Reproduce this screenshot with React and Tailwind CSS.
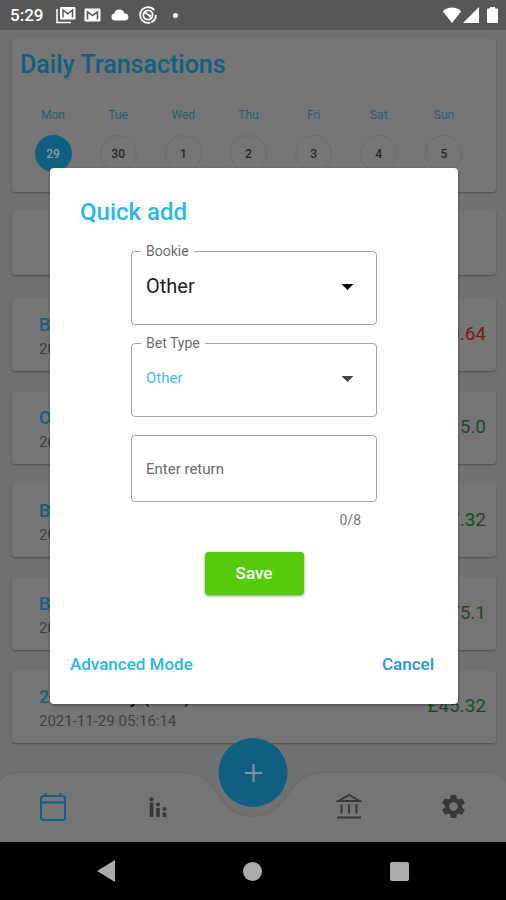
import { MdSettings } from "react-icons/md";

const days = [
  { name: "Mon", date: 29, selected: true },
  { name: "Tue", date: 30 },
  { name: "Wed", date: 1 },
  { name: "Thu", date: 2 },
  { name: "Fri", date: 3 },
  { name: "Sat", date: 4 },
  { name: "Sun", date: 5 },
];

const transactions = [
  { bookie: "B", detail: "", time: "2021", amount: "£0.64", loss: true },
  { bookie: "O", detail: "", time: "2021", amount: "5.0" },
  { bookie: "B", detail: "", time: "2021", amount: "£7.32" },
  { bookie: "B", detail: "", time: "2021", amount: "£75.1" },
  { bookie: "21bets", detail: "Daily (Free)", time: "2021-11-29 05:16:14", amount: "£45.32" },
];

const card = "rounded-[3px] bg-[#757575] shadow-[0_1px_2px_rgba(0,0,0,0.32)]";

function StatusBar() {
  return (
    <header className="flex h-[30px] shrink-0 items-center bg-[#575757] pr-2 pl-[10px] text-white">
      <time className="w-[46px] text-[17px] leading-5 font-medium">5:29</time>
      <div className="flex flex-1 items-center gap-2">
        <svg width="20" height="18" viewBox="0 0 20 18" aria-hidden="true">
          <path d="M1 3v13.5h14" fill="none" stroke="#fff" strokeWidth="1.5" />
          <rect x="4" y="1" width="15.5" height="12.5" rx="1" fill="#fff" />
          <path d="M7 11.5V4l4.8 3.8L16.5 4v7.5" fill="none" stroke="#575757" strokeWidth="1.5" />
        </svg>
        <svg width="17" height="14" viewBox="0 0 17 14" aria-hidden="true">
          <rect x="0.5" y="0.5" width="16" height="13" rx="1.2" fill="#fff" />
          <path d="M3.5 11.5V3.8l5 3.8 5-3.8v7.7" fill="none" stroke="#575757" strokeWidth="1.6" />
        </svg>
        <svg className="ml-[2px]" width="18" height="12" viewBox="0 0 18 12" aria-hidden="true">
          <path d="M4 11.500a3.600 3.600 0 0 1-.8-7.100A5.300 5.300 0 0 1 13.400 4.500 3.500 3.500 0 0 1 14.300 11.500Z" fill="#fff" />
        </svg>
        <svg className="ml-[2px]" width="18" height="18" viewBox="0 0 18 18" fill="none" stroke="#fff" aria-hidden="true">
          <circle cx="9" cy="9" r="7.9" strokeWidth="1.800" strokeDasharray="9 1 34 5.600" />
          <circle cx="9" cy="9" r="4.700" strokeWidth="1.700" />
          <path d="M5.500 8c2.500-2 4 2 7 1.500M6.500 6l5.500 6" strokeWidth="1.400" />
        </svg>
        <span className="ml-2 size-[5px] rounded-full bg-white" />
      </div>
      <svg width="56" height="18" viewBox="0 0 56 18" fill="#fff" aria-hidden="true">
        <path d="M10 17 .8 5.300C6 .3 14 .3 19.200 5.300Z" />
        <path d="M37 17V1L21 17Z" />
        <path d="M46 2.500h2V1h5v1.500h2a1 1 0 0 1 1 1v12.500a1 1 0 0 1-1 1h-9a1 1 0 0 1-1-1V3.500a1 1 0 0 1 1-1Z" />
      </svg>
    </header>
  );
}

function WeekCard() {
  return (
    <section className={`${card} h-[154px] px-2 pt-[13px]`}>
      <h1 className="text-[25px] leading-7 font-medium text-[#0f5f82]">Daily Transactions</h1>
      <ul className="mt-7 flex justify-between pr-[25px] pl-[14px]">
        {days.map((d) => (
          <li key={d.name} className="flex w-[38px] flex-col items-center gap-3 text-[12px] leading-4">
            <span className="text-[#22617c]">{d.name}</span>
            <button
              className={
                d.selected
                  ? "flex size-[37px] items-center justify-center rounded-full bg-[#115f80] font-medium text-[#8f9ba1]"
                  : "flex size-[37px] items-center justify-center rounded-full border border-[#6a6a6a] font-medium text-[#262626]"
              }
            >
              {d.date}
            </button>
          </li>
        ))}
      </ul>
    </section>
  );
}

function Transaction({ item }) {
  return (
    <li className={`${card} flex h-[73px] items-center justify-between pr-[10px] pl-[27px]`}>
      <div>
        <p className="text-[18px] leading-6 font-medium text-[#155f80]">
          {item.bookie} <span className="text-[#111]">{item.detail}</span>
        </p>
        <p className="pt-1 text-[15px] leading-4 text-[#404040]">{item.time}</p>
      </div>
      <span className={item.loss ? "text-[19px] text-[#7b1616]" : "text-[19px] text-[#164f1b]"}>{item.amount}</span>
    </li>
  );
}

function TabBar() {
  const tab = "flex h-[71px] flex-1 items-center justify-center text-[#373737]";
  return (
    <nav className="relative h-[71px] shrink-0" aria-label="Main">
      <svg className="absolute inset-0 h-full w-full" viewBox="0 0 506 71" preserveAspectRatio="none" aria-hidden="true">
        <path
          d="M-2 12C3 4 9 1 18 1H180C225 1 212 45 253 45S281 1 326 1H488C497 1 503 4 508 12V73H-2Z"
          fill="#757575"
          stroke="#6d6d6d"
          strokeWidth="2"
        />
      </svg>
      <div className="relative flex">
        <button className={tab} aria-label="Transactions">
          <svg width="28" height="30" viewBox="0 0 28 30" fill="none" stroke="#125f80" strokeWidth="2" aria-hidden="true">
            <rect x="2" y="4" width="24" height="24" rx="2.5" />
            <path d="M2 10.5h24M6.5 1v4M21.5 1v4" />
          </svg>
        </button>
        <button className={tab} aria-label="Statistics">
          <svg width="18" height="22" viewBox="0 0 18 22" fill="#373737" aria-hidden="true">
            <circle cx="2.5" cy="3.200" r="2" />
            <rect x="0.800" y="6.500" width="3.600" height="14.500" />
            <circle cx="9" cy="8.500" r="2" />
            <rect x="7.200" y="12" width="3.600" height="9" />
            <circle cx="15.500" cy="13" r="2" />
            <rect x="13.700" y="16.500" width="3.600" height="4.500" />
          </svg>
        </button>
        <div className="w-[86px] shrink-0" />
        <button className={tab} aria-label="Bank">
          <svg width="26" height="28" viewBox="0 0 26 28" fill="none" stroke="#373737" strokeWidth="2" aria-hidden="true">
            <path d="M1 24.500h24M5.500 11.500v9M13 11.500v9M20.500 11.500v9" />
            <path d="M2.500 8 13 2l10.500 6Z" />
            <path d="M1 8h24" />
          </svg>
        </button>
        <button className={tab} aria-label="Settings">
          <MdSettings size={29} />
        </button>
      </div>
      <button
        aria-label="Add transaction"
        className="absolute -top-[33px] left-1/2 flex size-[69px] -translate-x-1/2 items-center justify-center rounded-full bg-[#115f80]"
      >
        <svg width="18" height="18" viewBox="0 0 18 18" stroke="#83969f" strokeWidth="2" aria-hidden="true">
          <path d="M9 0v18M0 9h18" />
        </svg>
      </button>
    </nav>
  );
}

function SelectField({ id, label, textClass, caretClass }) {
  return (
    <fieldset className="relative h-[82px] rounded-[4px] border border-[#a3a3a3] pl-[9px]">
      <legend className="px-[5px] text-[14px] leading-4 text-[#6b6b6b]">
        <label htmlFor={id}>{label}</label>
      </legend>
      <select id={id} className={`h-[54px] w-full appearance-none bg-transparent pl-[5px] outline-none ${textClass}`}>
        <option>Other</option>
      </select>
      <svg
        className={`pointer-events-none absolute top-[25px] right-[22px] ${caretClass}`}
        width="13"
        height="6"
        viewBox="0 0 13 6"
        fill="currentColor"
        aria-hidden="true"
      >
        <path d="M0.500 0h12L6.500 6Z" />
      </svg>
    </fieldset>
  );
}

function QuickAdd() {
  return (
    <div
      role="dialog"
      aria-labelledby="quick-add-title"
      className="w-full rounded-[4px] bg-white px-5 pt-7 pb-7 shadow-[0_1px_3px_rgba(0,0,0,0.4)]"
    >
      <h2 id="quick-add-title" className="pl-[10px] text-[24px] leading-8 font-medium text-[#29b6f6]">
        Quick add
      </h2>
      <form className="mx-auto flex w-[246px] flex-col pt-[15px]">
        <div className="flex flex-col gap-[10px]">
          <SelectField id="bookie" label="Bookie" textClass="text-[20px] text-[#222]" caretClass="text-black" />
          <SelectField id="bet-type" label="Bet Type" textClass="text-[15px] text-[#45b8f5]" caretClass="text-[#444]" />
        </div>
        <input
          aria-label="Enter return"
          placeholder="Enter return"
          maxLength={8}
          className="mt-[18px] h-[67px] rounded-[4px] border border-[#a3a3a3] px-[14px] text-[15px] text-[#222] outline-none placeholder:text-[#6b6b6b]"
        />
        <span className="pt-2 pr-4 text-right text-[14px] leading-5 text-[#777]">0/8</span>
        <button
          type="button"
          className="mx-auto mt-[22px] h-[43px] w-[99px] rounded-[4px] bg-[#57cb0b] text-[17px] font-medium text-white shadow-[0_1px_3px_rgba(0,0,0,0.45)]"
        >
          Save
        </button>
      </form>
      <div className="flex justify-between pt-[57px] pr-1 text-[17px] leading-6 font-medium">
        <button className="text-[#29b6f6]">Advanced Mode</button>
        <button className="text-[#2493f3]">Cancel</button>
      </div>
    </div>
  );
}

export default function App() {
  return (
    <div className="relative flex min-h-screen flex-col bg-[#717171] font-[Roboto,sans-serif]">
      <StatusBar />
      <main className="flex-1 pt-2 pr-[10px] pl-3">
        <WeekCard />
        <section className={`${card} mt-[18px] h-[65px]`} />
        <ul className="mt-[23px] flex flex-col gap-5">
          {transactions.map((item, index) => (
            <Transaction key={index} item={item} />
          ))}
        </ul>
      </main>
      <TabBar />
      <footer className="flex h-[58px] shrink-0 items-center justify-center gap-32 bg-black text-[#ababab]">
        <svg width="18" height="22" viewBox="0 0 18 22" fill="currentColor" aria-hidden="true">
          <path d="M18 0v22L0 11Z" />
        </svg>
        <span className="size-[19px] rounded-full bg-current" />
        <span className="size-[19px] rounded-[2px] bg-current" />
      </footer>
      <div className="absolute inset-x-0 top-[30px] bottom-[58px] flex items-center pr-12 pl-[50px]">
        <QuickAdd />
      </div>
    </div>
  );
}
